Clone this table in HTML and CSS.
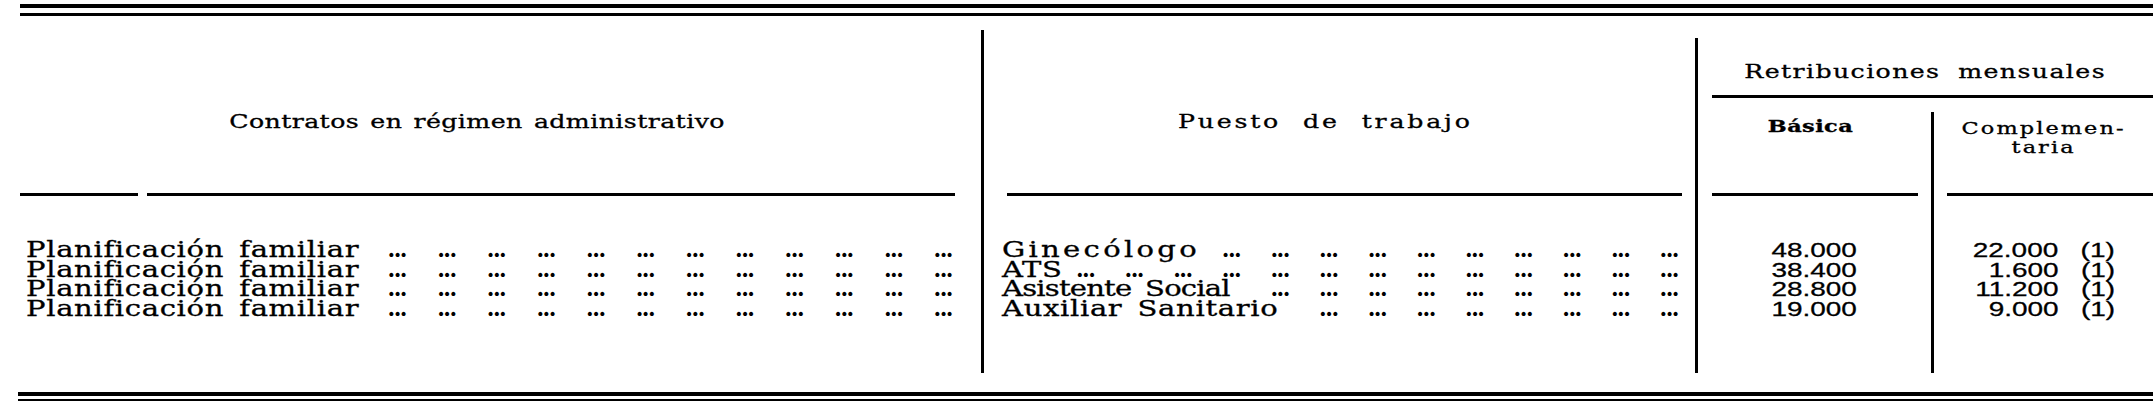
FILE: index.html
```html
<!DOCTYPE html>
<html lang="es">
<head>
<meta charset="utf-8">
<title>Contratos en régimen administrativo</title>
<link rel="stylesheet" href="styles.css">
</head>
<body>
<div class="page">
  <div class="double-rule top"></div>
  <div class="table">
    <div class="hcell c1">
      <div class="htext"><span class="sx">Contratos en régimen administrativo</span></div>
      <div class="hrule split"><span class="seg a"></span><span class="seg b"></span></div>
    </div>
    <div class="hcell c2 vline">
      <div class="htext"><span class="sx">Puesto de trabajo</span></div>
      <div class="hrule"></div>
    </div>
    <div class="retrib vline">
      <div class="rtext"><span class="sx">Retribuciones mensuales</span></div>
      <div class="rrule"></div>
    </div>
    <div class="subcell basica vline">
      <div class="stext"><span class="sx">Básica</span></div>
      <div class="hrule"></div>
    </div>
    <div class="subcell compl vline">
      <div class="stext"><span class="sx">Complemen-<br>taria</span></div>
      <div class="hrule"></div>
    </div>

    <div class="dcell d1">
      <div class="row"><span class="label">Planificación familiar</span><span class="leader">... ... ... ... ... ... ... ... ... ... ... ...</span></div>
      <div class="row"><span class="label">Planificación familiar</span><span class="leader">... ... ... ... ... ... ... ... ... ... ... ...</span></div>
      <div class="row"><span class="label">Planificación familiar</span><span class="leader">... ... ... ... ... ... ... ... ... ... ... ...</span></div>
      <div class="row"><span class="label">Planificación familiar</span><span class="leader">... ... ... ... ... ... ... ... ... ... ... ...</span></div>
    </div>
    <div class="dcell d2 vline">
      <div class="row"><span class="label spaced">Ginecólogo</span><span class="leader">... ... ... ... ... ... ... ... ... ...</span></div>
      <div class="row"><span class="label">ATS</span><span class="leader">... ... ... ... ... ... ... ... ... ... ... ... ...</span></div>
      <div class="row"><span class="label tight">Asistente Social</span><span class="leader">... ... ... ... ... ... ... ... ...</span></div>
      <div class="row"><span class="label">Auxiliar Sanitario</span><span class="leader">... ... ... ... ... ... ... ...</span></div>
    </div>
    <div class="dcell d3 vline">
      <div class="num"><span class="sx">48.000</span></div>
      <div class="num"><span class="sx">38.400</span></div>
      <div class="num"><span class="sx">28.800</span></div>
      <div class="num"><span class="sx">19.000</span></div>
    </div>
    <div class="dcell d4 vline">
      <div class="num"><span class="sx">22.000 (1)</span></div>
      <div class="num"><span class="sx">1.600 (1)</span></div>
      <div class="num"><span class="sx">11.200 (1)</span></div>
      <div class="num"><span class="sx">9.000 (1)</span></div>
    </div>
  </div>
  <div class="double-rule bottom"></div>
</div>
</body>
</html>
```

FILE: styles.css
```css
html, body {
  margin: 0;
  padding: 0;
  background: #fff;
}

body {
  width: 2153px;
  height: 417px;
  overflow: hidden;
  color: #000;
  font-family: "DejaVu Serif", "Liberation Serif", serif;
  -webkit-text-stroke: 0.3px #000;
}

.page {
  padding: 4px 0 0 20px;
}

/* horizontally widened type, as in the scanned original */
.sx {
  display: inline-block;
  transform: scaleX(1.4);
  transform-origin: center;
}

.double-rule {
  height: 5px;
  border-top: 4px solid #000;
  border-bottom: 3px solid #000;
}

.double-rule.bottom {
  margin-top: 19px;
  margin-left: -2px;
  height: 3px;
  border-bottom-width: 2px;
}

.table {
  display: grid;
  grid-template-columns: 961px 714px 236px 222px;
  grid-template-rows: 68px 98px 177px;
  margin-top: 14px;
}

.vline {
  border-left: 3px solid #000;
}

/* header */
.hcell {
  grid-row: 1 / 3;
  display: flex;
  flex-direction: column;
}

.c1 { grid-column: 1; }
.c2 { grid-column: 2; }

.htext {
  padding-top: 81px;
  text-align: center;
  font-size: 18px;
  line-height: 22px;
  letter-spacing: 0.3px;
  word-spacing: 2px;
  white-space: nowrap;
}

.c1 .htext {
  padding-right: 46px;
}

.c2 .htext {
  padding-right: 28px;
  letter-spacing: 2px;
  word-spacing: 8px;
}

.hrule {
  margin-top: auto;
  height: 3px;
  background: #000;
}

.hrule.split {
  display: flex;
  gap: 9px;
  margin-right: 26px;
  background: none;
}

.seg {
  height: 3px;
  background: #000;
}

.seg.a { width: 118px; }
.seg.b { flex: 1; }

.c2 .hrule {
  margin-left: 23px;
  margin-right: 13px;
}

.retrib {
  grid-column: 3 / 5;
  grid-row: 1;
  margin-top: 8px;
  padding-top: 23px;
}

.rtext {
  text-align: center;
  font-size: 18px;
  line-height: 22px;
  letter-spacing: 1px;
  word-spacing: 6px;
  white-space: nowrap;
}

.rrule {
  margin: 12px 0 0 14px;
  height: 3px;
  background: #000;
}

.subcell {
  grid-row: 2;
  display: flex;
  flex-direction: column;
}

.stext {
  text-align: center;
  white-space: nowrap;
}

.basica { grid-column: 3; }

.basica .stext {
  padding-top: 18px;
  padding-right: 8px;
  font-weight: bold;
  font-size: 16px;
  line-height: 22px;
  letter-spacing: 0.3px;
}

.basica .hrule {
  margin-left: 14px;
  margin-right: 13px;
}

.compl {
  grid-column: 4;
  margin-top: 14px;
}

.compl .stext {
  padding-top: 7px;
  font-size: 16px;
  line-height: 19px;
  letter-spacing: 1.5px;
}

.compl .hrule {
  margin-left: 13px;
}

/* data */
.dcell {
  grid-row: 3;
  padding-top: 44px;
}

.d1 { grid-column: 1; padding-left: 6px; padding-right: 29px; }
.d2 { grid-column: 2; padding-left: 18px; padding-right: 17px; }
.d3 { grid-column: 3; }
.d4 { grid-column: 4; padding-right: 38px; }

.row {
  display: flex;
  align-items: baseline;
  height: 19.5px;
  line-height: 19.5px;
  white-space: nowrap;
}

.label {
  flex-shrink: 0;
  font-size: 22px;
  letter-spacing: 0.5px;
  word-spacing: 4px;
  transform: scaleX(1.32);
  transform-origin: left center;
}

.label.spaced {
  letter-spacing: 2.5px;
}

.label.tight {
  letter-spacing: -0.6px;
  word-spacing: 4px;
}

.leader {
  margin-left: auto;
  font-size: 22px;
  font-weight: bold;
  letter-spacing: -1.5px;
  word-spacing: 25px;
  -webkit-text-stroke: 0;
}

.d2 .leader {
  word-spacing: 24px;
}

.num {
  height: 19.5px;
  line-height: 19.5px;
  font-family: "Liberation Sans", Arial, sans-serif;
  font-size: 21px;
  word-spacing: 11px;
  white-space: nowrap;
}

.num .sx {
  transform: scaleX(1.33);
}

.d3 .num { text-align: center; }
.d4 .num { text-align: right; }
.d4 .num .sx { transform-origin: right center; }
```
